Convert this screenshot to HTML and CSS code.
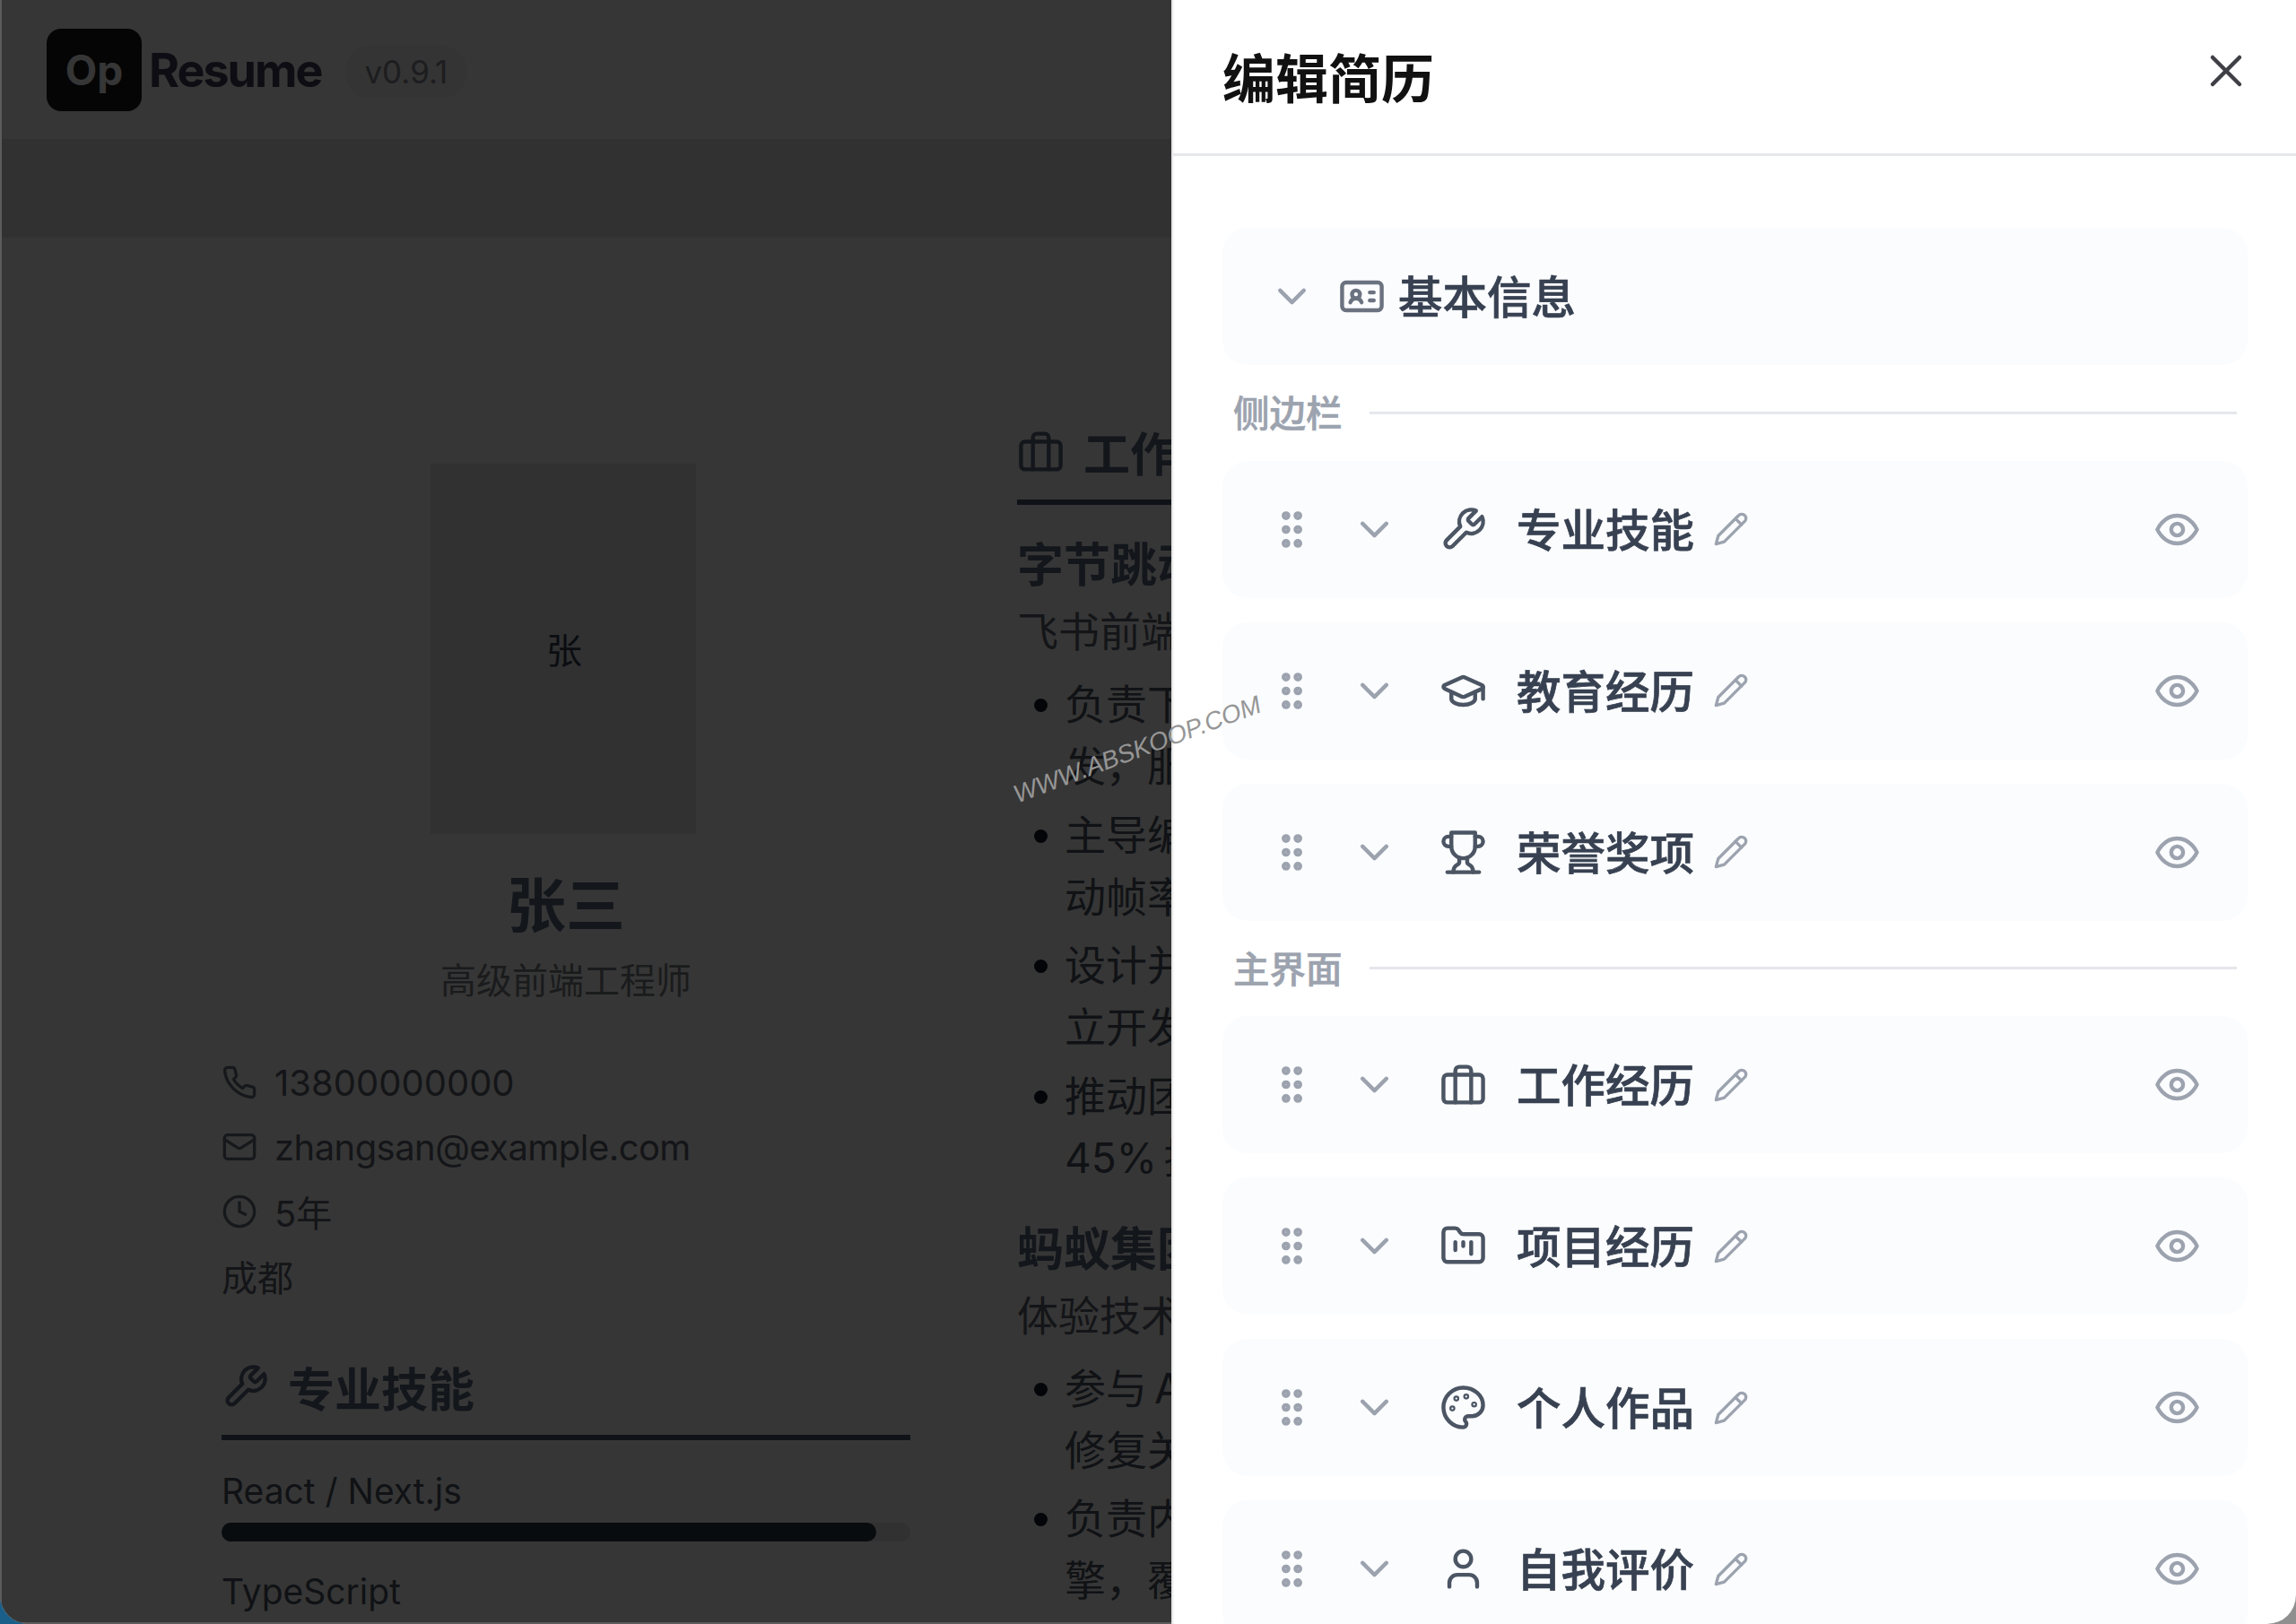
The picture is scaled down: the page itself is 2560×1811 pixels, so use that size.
FILE: index.html
```html
<!DOCTYPE html>
<html lang="zh-CN">
<head>
    <meta charset="UTF-8">
    <meta name="viewport" content="width=device-width, initial-scale=1.0">
    <title>OpResume</title>
    <link rel="stylesheet" href="styles.css">
</head>
<body>
    <svg class="sprite" xmlns="http://www.w3.org/2000/svg">
        <symbol id="i-wrench" viewBox="0 0 24 24"><path d="M14.7 6.3a1 1 0 0 0 0 1.4l1.6 1.6a1 1 0 0 0 1.4 0l3.77-3.77a6 6 0 0 1-7.94 7.94l-6.91 6.91a2.12 2.12 0 0 1-3-3l6.91-6.91a6 6 0 0 1 7.94-7.94l-3.76 3.76z"/></symbol>
        <symbol id="i-cap" viewBox="0 0 24 24"><path d="M21.42 10.922a1 1 0 0 0-.019-1.838L12.83 5.18a2 2 0 0 0-1.66 0L2.6 9.08a1 1 0 0 0 0 1.832l8.57 3.908a2 2 0 0 0 1.66 0z"/><path d="M22 10v6"/><path d="M6 12.5V16a6 3 0 0 0 12 0v-3.5"/></symbol>
        <symbol id="i-trophy" viewBox="0 0 24 24"><path d="M6 9H4.5a2.5 2.5 0 0 1 0-5H6"/><path d="M18 9h1.5a2.5 2.5 0 0 0 0-5H18"/><path d="M4 22h16"/><path d="M10 14.66V17c0 .55-.47.98-.97 1.21C7.85 18.75 7 20.24 7 22"/><path d="M14 14.66V17c0 .55.47.98.97 1.21C16.15 18.75 17 20.24 17 22"/><path d="M18 2H6v7a6 6 0 0 0 12 0V2Z"/></symbol>
        <symbol id="i-briefcase" viewBox="0 0 24 24"><rect width="20" height="14" x="2" y="7" rx="2"/><path d="M16 21V5a2 2 0 0 0-2-2h-4a2 2 0 0 0-2 2v16"/></symbol>
        <symbol id="i-folder" viewBox="0 0 24 24"><path d="M4 20h16a2 2 0 0 0 2-2V8a2 2 0 0 0-2-2h-7.93a2 2 0 0 1-1.66-.9l-.82-1.2A2 2 0 0 0 7.93 3H4a2 2 0 0 0-2 2v13c0 1.1.9 2 2 2Z"/><path d="M8 10v4"/><path d="M12 10v2"/><path d="M16 10v6"/></symbol>
        <symbol id="i-palette" viewBox="0 0 24 24"><circle cx="13.5" cy="6.5" r=".5"/><circle cx="17.5" cy="10.5" r=".5"/><circle cx="8.5" cy="7.5" r=".5"/><circle cx="6.5" cy="12.5" r=".5"/><path d="M12 2C6.5 2 2 6.5 2 12s4.5 10 10 10c.926 0 1.648-.746 1.648-1.688 0-.437-.18-.835-.437-1.125-.29-.289-.438-.652-.438-1.125a1.64 1.64 0 0 1 1.668-1.668h1.996c3.051 0 5.555-2.503 5.555-5.554C21.965 6.012 17.461 2 12 2z"/></symbol>
        <symbol id="i-user" viewBox="0 0 24 24"><path d="M19 21v-2a4 4 0 0 0-4-4H9a4 4 0 0 0-4 4v2"/><circle cx="12" cy="7" r="4"/></symbol>
        <symbol id="i-idcard" viewBox="0 0 24 24"><path d="M16 10h2"/><path d="M16 14h2"/><path d="M6.17 15a3 3 0 0 1 5.66 0"/><circle cx="9" cy="11" r="2"/><rect x="2" y="5" width="20" height="14" rx="2"/></symbol>
        <symbol id="i-eye" viewBox="0 0 24 24"><path d="M2 12s3-7 10-7 10 7 10 7-3 7-10 7-10-7-10-7Z"/><circle cx="12" cy="12" r="3"/></symbol>
        <symbol id="i-pencil" viewBox="0 0 24 24"><path d="M17 3a2.85 2.83 0 1 1 4 4L7.5 20.5 2 22l1.5-5.5Z"/><path d="m15 5 4 4"/></symbol>
        <symbol id="i-chevron" viewBox="0 0 24 24"><path d="m6 9 6 6 6-6"/></symbol>
        <symbol id="i-grip" viewBox="0 0 24 24"><circle cx="9" cy="12" r="1.2"/><circle cx="9" cy="5" r="1.2"/><circle cx="9" cy="19" r="1.2"/><circle cx="15" cy="12" r="1.2"/><circle cx="15" cy="5" r="1.2"/><circle cx="15" cy="19" r="1.2"/></symbol>
        <symbol id="i-close" viewBox="0 0 24 24"><path d="M18 6 6 18"/><path d="m6 6 12 12"/></symbol>
        <symbol id="i-phone" viewBox="0 0 24 24"><path d="M22 16.92v3a2 2 0 0 1-2.18 2 19.79 19.79 0 0 1-8.63-3.07 19.5 19.5 0 0 1-6-6 19.79 19.79 0 0 1-3.07-8.67A2 2 0 0 1 4.11 2h3a2 2 0 0 1 2 1.72 12.84 12.84 0 0 0 .7 2.81 2 2 0 0 1-.45 2.11L8.09 9.91a16 16 0 0 0 6 6l1.27-1.27a2 2 0 0 1 2.11-.45 12.84 12.84 0 0 0 2.81.7A2 2 0 0 1 22 16.92z"/></symbol>
        <symbol id="i-mail" viewBox="0 0 24 24"><rect width="20" height="16" x="2" y="4" rx="2"/><path d="m22 7-8.97 5.7a1.94 1.94 0 0 1-2.06 0L2 7"/></symbol>
        <symbol id="i-clock" viewBox="0 0 24 24"><circle cx="12" cy="12" r="10"/><polyline points="12 6 12 12 16 14"/></symbol>
    </svg>

    <div class="window">
        <div class="page">
            <header class="topbar">
                <span class="logo-box">Op</span>
                <span class="logo-text">Resume</span>
                <span class="version">v0.9.1</span>
            </header>
            <div class="toolbar"></div>

            <main class="resume">
                <aside class="resume-side">
                    <div class="avatar">张</div>
                    <h1 class="name">张三</h1>
                    <p class="job">高级前端工程师</p>
                    <ul class="contact">
                        <li><svg class="icon contact-icon"><use href="#i-phone"/></svg>13800000000</li>
                        <li class="contact-mail"><svg class="icon contact-icon"><use href="#i-mail"/></svg>zhangsan@example.com</li>
                        <li><svg class="icon contact-icon"><use href="#i-clock"/></svg>5年</li>
                        <li>成都</li>
                    </ul>
                    <h2 class="section-title skills-title"><svg class="icon title-icon"><use href="#i-wrench"/></svg>专业技能</h2>
                    <p class="skill-name">React / Next.js</p>
                    <div class="skill-track"><div class="skill-fill" style="width: 95%"></div></div>
                    <p class="skill-name skill-next">TypeScript</p>
                </aside>

                <section class="resume-body">
                    <h2 class="section-title"><svg class="icon title-icon"><use href="#i-briefcase"/></svg>工作经历</h2>
                    <h3 class="company">字节跳动</h3>
                    <p class="role">飞书前端团队</p>
                    <ul class="duties">
                        <li>负责下一代文档编辑器的开<br>发，服务千万级用户</li>
                        <li>主导编辑器性能优化，使滚<br>动帧率提升到稳定水平</li>
                        <li>设计并实现组件库，支持独<br>立开发与按需加载</li>
                        <li>推动团队工程化建设，效率<br>45% 提升</li>
                    </ul>
                    <h3 class="company">蚂蚁集团</h3>
                    <p class="role">体验技术部</p>
                    <ul class="duties">
                        <li>参与 Ant Design 组件开发，<br>修复关键问题</li>
                        <li>负责内部低代码平台的引<br>擎，覆盖多条业务线</li>
                    </ul>
                </section>
            </main>
        </div>

        <div class="overlay"></div>

        <aside class="drawer">
            <div class="drawer-head">
                <h2 class="drawer-title">编辑简历</h2>
                <svg class="icon close-icon"><use href="#i-close"/></svg>
            </div>

            <div class="drawer-body">
                <div class="card card-basic">
                    <svg class="icon icon-md muted"><use href="#i-chevron"/></svg>
                    <svg class="icon icon-md basic-icon"><use href="#i-idcard"/></svg>
                    <span class="card-name">基本信息</span>
                </div>

                <div class="group-label"><span>侧边栏</span><i></i></div>
                <div class="card-list">
                    <div class="card">
                        <svg class="icon icon-md muted"><use href="#i-grip"/></svg>
                        <svg class="icon icon-md muted"><use href="#i-chevron"/></svg>
                        <svg class="icon icon-md card-icon"><use href="#i-wrench"/></svg>
                        <span class="card-name">专业技能</span>
                        <svg class="icon icon-sm muted"><use href="#i-pencil"/></svg>
                        <svg class="icon icon-md muted eye"><use href="#i-eye"/></svg>
                    </div>
                    <div class="card">
                        <svg class="icon icon-md muted"><use href="#i-grip"/></svg>
                        <svg class="icon icon-md muted"><use href="#i-chevron"/></svg>
                        <svg class="icon icon-md card-icon"><use href="#i-cap"/></svg>
                        <span class="card-name">教育经历</span>
                        <svg class="icon icon-sm muted"><use href="#i-pencil"/></svg>
                        <svg class="icon icon-md muted eye"><use href="#i-eye"/></svg>
                    </div>
                    <div class="card">
                        <svg class="icon icon-md muted"><use href="#i-grip"/></svg>
                        <svg class="icon icon-md muted"><use href="#i-chevron"/></svg>
                        <svg class="icon icon-md card-icon"><use href="#i-trophy"/></svg>
                        <span class="card-name">荣誉奖项</span>
                        <svg class="icon icon-sm muted"><use href="#i-pencil"/></svg>
                        <svg class="icon icon-md muted eye"><use href="#i-eye"/></svg>
                    </div>
                </div>

                <div class="group-label"><span>主界面</span><i></i></div>
                <div class="card-list">
                    <div class="card">
                        <svg class="icon icon-md muted"><use href="#i-grip"/></svg>
                        <svg class="icon icon-md muted"><use href="#i-chevron"/></svg>
                        <svg class="icon icon-md card-icon"><use href="#i-briefcase"/></svg>
                        <span class="card-name">工作经历</span>
                        <svg class="icon icon-sm muted"><use href="#i-pencil"/></svg>
                        <svg class="icon icon-md muted eye"><use href="#i-eye"/></svg>
                    </div>
                    <div class="card">
                        <svg class="icon icon-md muted"><use href="#i-grip"/></svg>
                        <svg class="icon icon-md muted"><use href="#i-chevron"/></svg>
                        <svg class="icon icon-md card-icon"><use href="#i-folder"/></svg>
                        <span class="card-name">项目经历</span>
                        <svg class="icon icon-sm muted"><use href="#i-pencil"/></svg>
                        <svg class="icon icon-md muted eye"><use href="#i-eye"/></svg>
                    </div>
                    <div class="card">
                        <svg class="icon icon-md muted"><use href="#i-grip"/></svg>
                        <svg class="icon icon-md muted"><use href="#i-chevron"/></svg>
                        <svg class="icon icon-md card-icon"><use href="#i-palette"/></svg>
                        <span class="card-name">个人作品</span>
                        <svg class="icon icon-sm muted"><use href="#i-pencil"/></svg>
                        <svg class="icon icon-md muted eye"><use href="#i-eye"/></svg>
                    </div>
                    <div class="card">
                        <svg class="icon icon-md muted"><use href="#i-grip"/></svg>
                        <svg class="icon icon-md muted"><use href="#i-chevron"/></svg>
                        <svg class="icon icon-md card-icon"><use href="#i-user"/></svg>
                        <span class="card-name">自我评价</span>
                        <svg class="icon icon-sm muted"><use href="#i-pencil"/></svg>
                        <svg class="icon icon-md muted eye"><use href="#i-eye"/></svg>
                    </div>
                </div>
            </div>
        </aside>

        <div class="watermark">WWW.ABSKOOP.COM</div>
    </div>
</body>
</html>
```

FILE: styles.css
```css
* {
    margin: 0;
    padding: 0;
    box-sizing: border-box;
}

html {
    background: linear-gradient(90deg, #1a5f8a 50%, #8f8f8f 50%);
}

body {
    font-family: Inter, "Noto Sans CJK SC", sans-serif;
    height: 100vh;
    overflow: hidden;
}

ul {
    list-style: none;
}

.sprite {
    display: none;
}

.icon {
    display: block;
    flex: none;
    fill: none;
    stroke: currentColor;
    stroke-width: 2;
    stroke-linecap: round;
    stroke-linejoin: round;
}

.window {
    position: relative;
    height: 100vh;
    overflow: hidden;
    border-radius: 0 0 32px 32px;
}

/* Page behind the drawer */
.page {
    height: 100%;
    background: #fff;
    overflow: hidden;
}

.topbar {
    height: 155px;
    padding: 0 52px;
    display: flex;
    align-items: center;
}

.logo-box {
    width: 106px;
    height: 92px;
    border-radius: 16px;
    background: #18181b;
    color: #fff;
    font-size: 46px;
    font-weight: 700;
    display: flex;
    align-items: center;
    justify-content: center;
}

.logo-text {
    margin-left: 8px;
    padding-top: 2px;
    color: #3f3f5a;
    font-size: 52px;
    font-weight: 700;
    letter-spacing: -2px;
}

.version {
    margin-top: 4px;
    margin-left: 26px;
    padding: 0 22px;
    height: 60px;
    border-radius: 30px;
    background: #f3f4f6;
    color: #8a8a92;
    font-size: 35px;
    display: flex;
    align-items: center;
}

.toolbar {
    height: 110px;
    background: #e8e8e8;
}

.resume {
    display: grid;
    grid-template-columns: 768px 1000px;
    column-gap: 119px;
    padding: 205px 0 0 247px;
}

.resume-side {
    padding-top: 47px;
}

.avatar {
    width: 296px;
    height: 413px;
    margin-left: 233px;
    padding: 0 0 2px 2px;
    background: #e5e7eb;
    color: #374151;
    font-size: 40px;
    display: flex;
    align-items: center;
    justify-content: center;
}

.name {
    margin-top: 35px;
    color: #5b6b80;
    font-size: 66px;
    line-height: 90px;
    font-weight: 700;
    text-align: center;
}

.job {
    margin-top: 9px;
    color: #7c7f85;
    font-size: 40px;
    line-height: 60px;
    text-align: center;
}

.contact {
    margin-top: 53px;
    display: flex;
    flex-direction: column;
    gap: 12px;
}

.contact li {
    height: 60px;
    display: flex;
    align-items: center;
    gap: 19px;
    color: #5f6570;
    font-size: 40px;
}

.contact .contact-mail {
    letter-spacing: -0.55px;
}

.contact-icon {
    width: 40px;
    height: 40px;
    color: #6b7280;
}

.section-title {
    height: 93px;
    padding-bottom: 20px;
    border-bottom: 6px solid #4a5a70;
    display: flex;
    align-items: center;
    gap: 21px;
    color: #5b6b80;
    font-size: 52px;
    font-weight: 700;
    white-space: nowrap;
}

.skills-title {
    margin-top: 60px;
}

.title-icon {
    width: 53px;
    height: 53px;
}

.skill-name {
    margin-top: 27px;
    color: #4b5563;
    font-size: 39px;
    line-height: 60px;
}

.skill-track {
    height: 21px;
    margin-top: 5px;
    border-radius: 11px;
    background: #e5e7eb;
}

.skill-fill {
    height: 100%;
    border-radius: 11px;
    background: #2a3a4a;
}

.skill-next {
    margin-top: 26px;
}

.company {
    margin-top: 33px;
    color: #5b6b80;
    font-size: 52px;
    line-height: 70px;
    font-weight: 700;
    white-space: nowrap;
}

.role {
    margin-top: 5px;
    color: #5f6570;
    font-size: 46px;
    line-height: 66px;
    white-space: nowrap;
}

.duties {
    margin-top: 14px;
    display: flex;
    flex-direction: column;
    gap: 7.5px;
}

.duties li {
    position: relative;
    padding-left: 53px;
    color: #4b5563;
    font-size: 46px;
    line-height: 69px;
    word-spacing: -5px;
    white-space: nowrap;
}

.duties li::before {
    content: "";
    position: absolute;
    left: 19px;
    top: 28px;
    width: 15px;
    height: 15px;
    border-radius: 50%;
    background: #111827;
}

.overlay {
    position: absolute;
    inset: 0;
    background: rgba(0, 0, 0, 0.79);
    box-shadow: inset 2px 0 0 #5c5c5c, inset 0 -2px 0 #5c5c5c;
}

/* Edit drawer */
.drawer {
    position: absolute;
    top: 0;
    right: 0;
    bottom: 0;
    width: 1254px;
    background: #fff;
    overflow: hidden;
    box-shadow: inset 3px 0 2px -1px #e2e2e2;
}

.drawer-head {
    height: 174px;
    padding: 0 48px 0 57px;
    border-bottom: 3px solid #e5e7eb;
    display: flex;
    align-items: center;
    justify-content: space-between;
}

.drawer-title {
    margin-bottom: 3px;
    color: #111;
    font-size: 59px;
    font-weight: 700;
}

.close-icon {
    width: 60px;
    height: 60px;
    margin-bottom: 13px;
    color: #3f3f46;
    stroke-width: 1.8;
}

.drawer-body {
    padding: 80px 54px 0 57px;
}

.card-list {
    display: flex;
    flex-direction: column;
    gap: 27px;
}

.card {
    height: 153px;
    padding: 0 52px 0 51px;
    border-radius: 28px;
    background: #fbfcfe;
    display: flex;
    align-items: center;
    gap: 39px;
}

.card-basic {
    gap: 25px;
}

.icon-md {
    width: 53px;
    height: 53px;
}

.icon-sm {
    width: 40px;
    height: 40px;
    margin-left: -18px;
}

.muted {
    color: #9ca3af;
}

.card-icon {
    margin-left: 7px;
    color: #4b5563;
}

.basic-icon {
    color: #6b7280;
}

.card-name {
    margin-bottom: 4px;
    color: #374151;
    font-size: 49.5px;
    font-weight: 500;
    -webkit-text-stroke: 0.7px currentColor;
    white-space: nowrap;
}

.card .card-icon + .card-name {
    margin-left: -6px;
}

.card-basic .card-name {
    margin-left: -11px;
}

.eye {
    margin-left: auto;
}

.group-label {
    height: 106.5px;
    padding: 0 12px;
    display: flex;
    align-items: center;
    gap: 30px;
    color: #9ca3af;
    font-size: 40.5px;
    font-weight: 500;
    -webkit-text-stroke: 0.6px currentColor;
}

.group-label span {
    margin-bottom: 3px;
}

.group-label i {
    flex: 1;
    height: 3px;
    background: #e5e7eb;
}

.watermark {
    position: absolute;
    left: 1118px;
    top: 818px;
    width: 300px;
    text-align: center;
    color: #969696;
    font-family: "Liberation Sans", sans-serif;
    font-size: 28px;
    font-style: italic;
    line-height: 36px;
    white-space: nowrap;
    transform: rotate(-20.5deg);
}
```
